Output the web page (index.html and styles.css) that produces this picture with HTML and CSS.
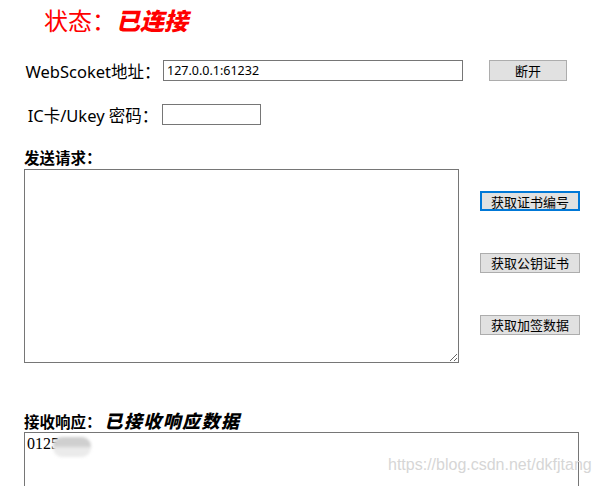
FILE: index.html
```html
<!DOCTYPE html>
<html lang="zh-CN">
<head>
  <meta charset="UTF-8" />
  <title>WebSocket 测试</title>
  <link rel="stylesheet" href="styles.css">
</head>
<body>
  <div class="status">状态：<b>已连接</b></div>

  <div class="row">
    <label class="label" for="wsUrl">WebScoket地址：</label>
    <input class="field field-url" type="text" id="wsUrl" value="127.0.0.1:61232" />
    <button class="btn btn-close">断开</button>
  </div>

  <div class="row row-pin">
    <label class="label" for="pin">IC卡/Ukey 密码：</label>
    <input class="field field-pin" type="password" id="pin" />
  </div>

  <div class="section-title">发送请求：</div>
  <div class="request">
    <textarea class="box box-request"></textarea>
    <div class="actions">
      <button class="btn btn-action btn-focus">获取证书编号</button>
      <button class="btn btn-action">获取公钥证书</button>
      <button class="btn btn-action">获取加签数据</button>
    </div>
  </div>

  <div class="section-title section-resp">接收响应：<i>已接收响应数据</i></div>
  <div class="response">
    <div class="box box-response">0125</div>
    <span class="smudge"></span>
    <span class="watermark">https://blog.csdn.net/dkfjtang</span>
  </div>
</body>
</html>
```

FILE: styles.css
```css
body {
  margin: 0;
  padding-left: 24px;
  background: #fff;
  color: #000;
  font-family: "Noto Sans", "Noto Sans CJK SC", sans-serif;
  overflow: hidden;
}

.status {
  margin-top: 6px;
  padding-left: 20px;
  font-family: "Noto Sans CJK SC", sans-serif;
  font-size: 24px;
  line-height: 28px;
  color: #ff0000;
}

.status b {
  font-style: italic;
  font-weight: 900;
}

.row {
  display: flex;
  align-items: center;
  margin-top: 26px;
  height: 21px;
}

.row-pin {
  margin-top: 23px;
}

.label {
  width: 138px;
  text-align: center;
  font-size: 16.5px;
  white-space: nowrap;
}

.field {
  box-sizing: border-box;
  height: 21px;
  border: 1px solid #767676;
  padding: 0 3px;
  font-family: "Noto Sans", sans-serif;
  font-size: 12.5px;
  outline: none;
}

.field-url {
  width: 300px;
  margin-left: 1px;
}

.field-pin {
  width: 99px;
}

.btn {
  box-sizing: border-box;
  height: 21px;
  background: #e1e1e1;
  border: 1px solid #adadad;
  padding: 0 0 1px;
  font-family: "Noto Sans CJK SC", sans-serif;
  font-size: 13px;
  line-height: 17px;
  color: #000;
}

.btn-close {
  width: 78px;
  margin-left: 26px;
}

.section-title {
  margin-top: 22px;
  font-family: "Noto Sans CJK SC", sans-serif;
  font-size: 15.5px;
  font-weight: bold;
  line-height: 20px;
  margin-bottom: 2px;
}

.section-resp {
  margin-top: 47px;
  margin-bottom: 1px;
}

.section-resp i {
  margin-left: 3px;
  font-size: 18px;
  letter-spacing: 1.4px;
  font-weight: 900;
}

.request {
  display: flex;
  align-items: flex-start;
}

.box {
  box-sizing: border-box;
  border: 1px solid #767676;
  font-family: "Liberation Serif", serif;
  font-size: 16px;
  padding: 2px;
}

.box-request {
  width: 435px;
  height: 194px;
  resize: both;
}

.actions {
  display: flex;
  flex-direction: column;
  gap: 42px;
  margin-left: 21px;
  margin-top: 22px;
}

.btn-action {
  width: 100px;
  height: 20px;
}

.btn-focus {
  border: 2px solid #0078d7;
}

.response {
  position: relative;
  width: 555px;
}

.box-response {
  height: 80px;
  padding: 2px 2px;
  line-height: 18px;
}

.smudge {
  position: absolute;
  left: 29px;
  top: 5px;
  width: 38px;
  height: 20px;
  border-radius: 9px;
  background: linear-gradient(#cfcfcf 0 45%, #ebebeb 55% 100%);
  filter: blur(1.5px);
}

.watermark {
  position: absolute;
  left: 364px;
  top: 24px;
  font-family: "Liberation Sans", Arial, sans-serif;
  font-size: 16px;
  color: #d6d6d6;
}
```
